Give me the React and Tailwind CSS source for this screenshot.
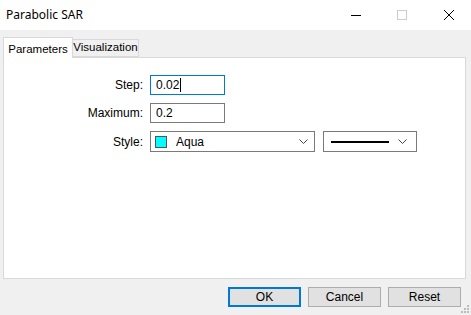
import React from "react";

const ui = { fontFamily: "'Liberation Sans', Arial, sans-serif" };

function Chevron({ className = "" }) {
  return (
    <svg width="9" height="5" viewBox="0 0 9 5" className={className}>
      <path d="M0.5 0.5 L4.5 4.5 L8.5 0.5" fill="none" stroke="#444" strokeWidth="1" />
    </svg>
  );
}

export default function App() {
  return (
    <div className="w-[471px] h-[315px] bg-[#f0f0f0] flex flex-col overflow-hidden text-[#000]" style={ui}>
      {/* title bar */}
      <div className="h-[30px] bg-white flex items-center shrink-0">
        <div className="pl-[6px] text-[12px] text-black" style={{ fontFamily: "'Noto Sans', 'Liberation Sans', sans-serif" }}>
          Parabolic SAR
        </div>
        <div className="ml-auto flex items-center h-full">
          <div className="w-[46px] h-full flex items-center justify-center">
            <div className="w-[10px] h-px bg-black" />
          </div>
          <div className="w-[46px] h-full flex items-center justify-center">
            <div className="w-[10px] h-[10px] border border-[#cccccc]" />
          </div>
          <div className="w-[46px] h-full flex items-center justify-center pl-[2px]">
            <svg width="10" height="10" viewBox="0 0 10 10">
              <path d="M0 0 L10 10 M10 0 L0 10" stroke="#000" strokeWidth="1" />
            </svg>
          </div>
        </div>
      </div>

      {/* tabs */}
      <div className="mt-[7px] ml-[3px] flex items-end h-[21px] relative z-10 text-[11.5px]">
        <div className="h-[21px] w-[70px] bg-white border border-b-0 border-[#d9d9d9] flex items-start pt-[3px] justify-center">
          Parameters
        </div>
        <div className="h-[18px] w-[66px] bg-[#f0f0f0] border border-l-0 border-[#d9d9d9] flex items-center justify-center mb-px">
          Visualization
        </div>
      </div>

      {/* panel */}
      <div className="ml-[3px] -mt-px w-[463px] h-[222px] bg-white border border-[#d9d9d9] text-[12px] flex flex-col pt-[17px]">
        <div className="flex items-center h-[20px]">
          <div className="w-[146px] text-right pr-[7px]">Step:</div>
          <div className="w-[75px] h-[20px] border border-[#0078d7] flex items-center pl-[5px]">
            0.02<span className="inline-block w-px h-[14px] bg-black ml-px" />
          </div>
        </div>
        <div className="flex items-center h-[20px] mt-[8px]">
          <div className="w-[146px] text-right pr-[7px]">Maximum:</div>
          <div className="w-[75px] h-[20px] border border-[#7a7a7a] flex items-center pl-[5px]">0.2</div>
        </div>
        <div className="flex items-center h-[21px] mt-[8px]">
          <div className="w-[146px] text-right pr-[7px]">Style:</div>
          <div className="w-[165px] h-[21px] border border-[#7a7a7a] flex items-center pl-[4px] pr-[6px]">
            <div className="w-[12px] h-[12px] bg-[#00ffff] border border-[#555]" />
            <div className="ml-[9px]">Aqua</div>
            <Chevron className="ml-auto" />
          </div>
          <div className="ml-[8px] w-[94px] h-[21px] border border-[#7a7a7a] flex items-center pl-[7px] pr-[9px]">
            <div className="w-[58px] h-[2px] bg-black" />
            <Chevron className="ml-auto" />
          </div>
        </div>
      </div>

      {/* buttons */}
      <div className="flex justify-end mt-[8px] pr-[10px] gap-[7px] text-[12px] relative">
        <button className="w-[73px] h-[20px] bg-[#e1e1e1] border-2 border-[#0078d7] flex items-center justify-center">OK</button>
        <button className="w-[73px] h-[20px] bg-[#e1e1e1] border border-[#adadad] flex items-center justify-center">Cancel</button>
        <button className="w-[73px] h-[20px] bg-[#e1e1e1] border border-[#adadad] flex items-center justify-center">Reset</button>
      </div>
      <div className="relative flex-1">
        <svg width="9" height="9" viewBox="0 0 9 9" className="absolute right-[1px] bottom-[1px]">
          <rect x="6" y="0" width="2" height="2" fill="#bcbcbc" />
          <rect x="3" y="3" width="2" height="2" fill="#bcbcbc" />
          <rect x="6" y="3" width="2" height="2" fill="#bcbcbc" />
          <rect x="0" y="6" width="2" height="2" fill="#bcbcbc" />
          <rect x="3" y="6" width="2" height="2" fill="#bcbcbc" />
          <rect x="6" y="6" width="2" height="2" fill="#bcbcbc" />
        </svg>
      </div>
    </div>
  );
}
